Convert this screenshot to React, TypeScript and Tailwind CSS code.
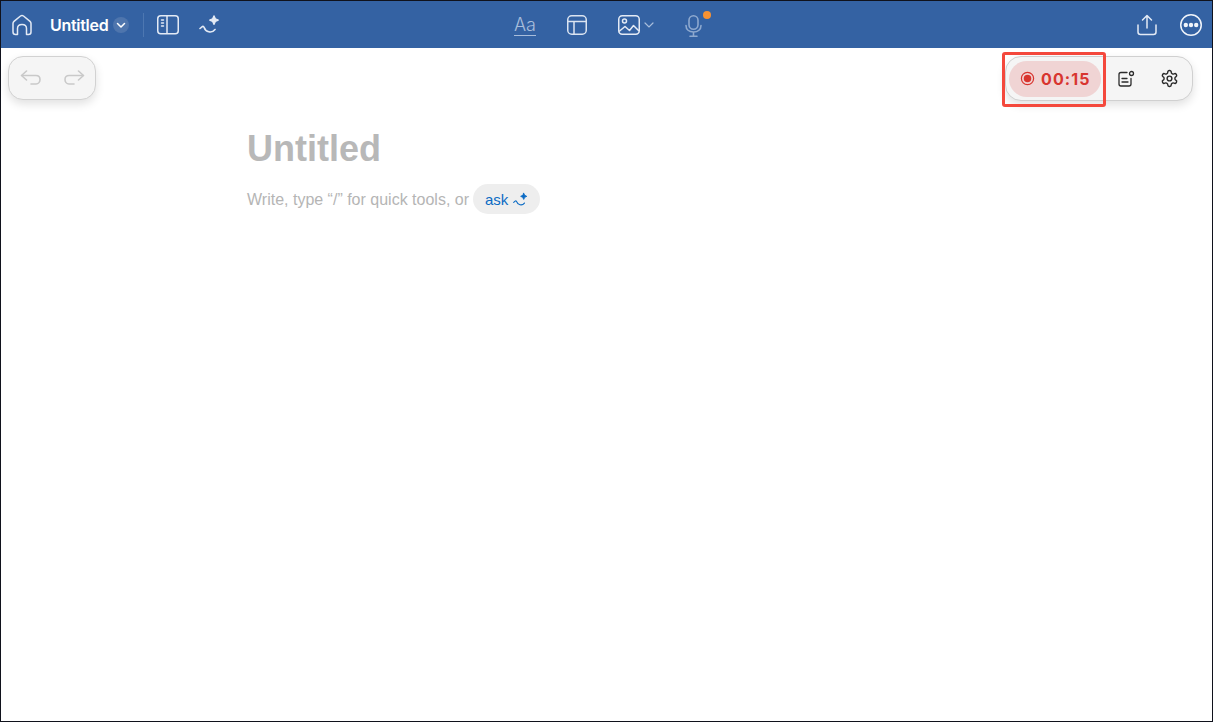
import React from "react";

const Sparkle = ({ className = "" }: { className?: string }) => (
  <svg viewBox="0 0 21 21" className={className} fill="none" stroke="currentColor" strokeWidth="1.600" strokeLinecap="round" strokeLinejoin="round">
    <path d="M1 14.500 L3 12.800 C4 12 4.800 12.500 5.300 13.800 C6.500 17.800 12.500 20 16 15.500" />
    <path d="M15 1.800 L16.400 4.700 L19.300 6.100 L16.400 7.500 L15 10.400 L13.600 7.500 L10.700 6.100 L13.600 4.700 Z" fill="currentColor" strokeWidth="1.200" />
  </svg>
);

export default function App() {
  return (
    <div className="relative flex h-[722px] w-[1213px] flex-col overflow-hidden border border-[#10121c] bg-white font-['Inter',sans-serif]">
      <header className="flex h-[47px] shrink-0 items-center justify-between bg-[#3462a3] text-white">
        <div className="flex items-center">
          <svg viewBox="0 0 22 22" className="ml-[10px] h-[22px] w-[22px]" fill="none" stroke="#e3eaf5" strokeWidth="1.500" strokeLinejoin="round" strokeLinecap="round">
            <path d="M6.500 20.500H4.500C2.800 20.500 2 19.600 2 18V9.500C2 8.600 2.300 8 3 7.400L9.500 2C10.400 1.300 11.600 1.300 12.500 2L19 7.400C19.700 8 20 8.600 20 9.500V18C20 19.600 19.200 20.500 17.500 20.500H15.500V14.500C15.500 12 13.500 10.500 11 10.500C8.500 10.500 6.500 12 6.500 14.500Z" />
          </svg>
          <span className="ml-[17px] text-[16px] font-semibold leading-none tracking-[-0.3px]">Untitled</span>
          <span className="ml-[5px] flex h-4 w-4 items-center justify-center rounded-full bg-[#4e75ad]">
            <svg viewBox="0 0 12 12" className="h-3 w-3" fill="none" stroke="white" strokeWidth="1.500" strokeLinecap="round" strokeLinejoin="round"><path d="M2.500 4.500 6 8l3.500-3.500" /></svg>
          </span>
          <span className="ml-[14px] h-6 w-px bg-[#4d77b1]" />
          <svg viewBox="0 0 22 20" className="ml-[13px] h-5 w-[22px]" fill="none" stroke="#e3eaf5" strokeWidth="1.500">
            <rect x="0.750" y="0.750" width="20.500" height="18" rx="3" />
            <path d="M10 1v18" />
            <path d="M4.500 5h2M4.500 8h2M4.500 11h2" strokeLinecap="round" />
          </svg>
          <Sparkle className="ml-[20px] h-[21px] w-[21px] text-[#e3eaf5]" />
        </div>

        <div className="absolute left-[513px] top-[12px] flex items-center">
          <div className="flex h-[21px] w-[22px] flex-col items-center border-b-[1.500px] border-[#a8bddb] text-[18px] font-light leading-[20px] text-[#a8bddb]">Aa</div>
          <svg viewBox="0 0 20 20" className="ml-[31px] h-5 w-5" fill="none" stroke="#dbe4f1" strokeWidth="1.500">
            <rect x="0.750" y="0.750" width="18.500" height="18.500" rx="4" />
            <path d="M1 6.500h18M7 6.500V19" />
          </svg>
          <svg viewBox="0 0 22 20" className="ml-[31px] h-5 w-[22px]" fill="none" stroke="#e3eaf5" strokeWidth="1.500" strokeLinejoin="round">
            <rect x="0.750" y="0.750" width="20.500" height="18.500" rx="3.500" />
            <circle cx="6.500" cy="6" r="2" />
            <path d="M1 16.500 7 11.500 11.500 15.500 15.500 10.500 21 16" />
          </svg>
          <svg viewBox="0 0 10 8" className="ml-[4px] h-2 w-[10px]" fill="none" stroke="#a8bddb" strokeWidth="1.200" strokeLinecap="round"><path d="M1 2l4 4 4-4" /></svg>
          <span className="relative ml-[31px] mt-[2px] block h-[22px] w-[17px]">
            <svg viewBox="0 0 17 22" className="h-[22px] w-[17px]" fill="none" stroke="#8ea9cf" strokeWidth="1.600" strokeLinecap="round">
              <rect x="4" y="0.800" width="9" height="13.500" rx="4.500" />
              <path d="M1 10.500c0 4 3 6.500 7.500 6.500s7.500-2.500 7.500-6.500M8.500 17v4M5 21.200h7" />
            </svg>
            <span className="absolute left-[18px] top-[-4px] h-2 w-2 rounded-full bg-[#f79233]" />
          </span>
        </div>

        <div className="flex items-center">
          <svg viewBox="0 0 20 22" className="mr-[23px] h-[22px] w-5" fill="none" stroke="#e3eaf5" strokeWidth="1.500" strokeLinecap="round" strokeLinejoin="round">
            <path d="M10 14V2M5.500 6 10 1.500 14.500 6" />
            <path d="M1 11v7c0 1.700.8 2.500 2.500 2.500h13c1.700 0 2.500-.8 2.500-2.500v-7" />
          </svg>
          <svg viewBox="0 0 22 22" className="mr-[10px] h-[22px] w-[22px]" fill="none">
            <circle cx="11" cy="11" r="10.250" stroke="#f0f4fa" strokeWidth="1.500" />
            <circle cx="5.800" cy="11" r="2.200" fill="#f0f4fa" />
            <circle cx="11" cy="11" r="2.200" fill="#f0f4fa" />
            <circle cx="16.200" cy="11" r="2.200" fill="#f0f4fa" />
          </svg>
        </div>
      </header>

      <main className="w-[640px] pl-[246px] pt-[79px]">
        <h1 className="text-[36px] font-bold leading-[44px] text-[#b8b8b8] font-['Liberation_Sans',sans-serif]">Untitled</h1>
        <div className="mt-[13px] flex items-center font-['Liberation_Sans',sans-serif] text-[16px] leading-[28px] text-[#b5b5b5]">
          <span className="pt-[2px]">Write, type “/” for quick tools, or</span>
          <span className="ml-[4px] flex h-[30px] w-[67px] items-center gap-[5px] rounded-full bg-[#eeeeee] pl-[12px] pt-[1px] text-[15px] text-[#0b6bc4]">
            ask
            <Sparkle className="h-[15px] w-[15px]" />
          </span>
        </div>
      </main>

      <div className="absolute left-[7px] top-[55px] flex h-[44px] w-[88px] items-center justify-center gap-[21px] rounded-[15px] border border-[#d2d2d2] bg-[#f5f5f5] shadow-[0_4px_10px_rgba(0,0,0,0.12)]">
        <svg viewBox="0 0 22 16" className="h-4 w-[22px]" fill="none" stroke="#c9c9c9" strokeWidth="1.600" strokeLinecap="round" strokeLinejoin="round">
          <path d="M6.500 1 1.500 5.500 6.500 10" />
          <path d="M2 5.500h14c2.500 0 4 1.800 4 4s-1.500 4.500-4 4.500h-5" />
        </svg>
        <svg viewBox="0 0 22 16" className="h-4 w-[22px]" fill="none" stroke="#c9c9c9" strokeWidth="1.600" strokeLinecap="round" strokeLinejoin="round">
          <path d="M15.500 1 20.500 5.500 15.500 10" />
          <path d="M20 5.500H6c-2.500 0-4 1.800-4 4s1.500 4.500 4 4.500h5" />
        </svg>
      </div>

      <div className="absolute left-[1004px] top-[55px] flex h-[45px] w-[188px] items-center rounded-[16px] border border-[#d0d0d0] bg-[#f5f5f5] pl-[3px] shadow-[0_4px_10px_rgba(0,0,0,0.12)]">
        <div className="flex h-[36px] w-[92px] items-center rounded-full bg-[#f0d4d4] pl-[11px] text-[#d8352f]">
          <svg viewBox="0 0 16 16" className="h-[15px] w-[15px]" fill="none">
            <circle cx="8" cy="8" r="6.500" stroke="#d8352f" strokeWidth="1.300" />
            <circle cx="8" cy="8" r="4" fill="#d8352f" />
          </svg>
          <span className="ml-[6px] text-[16px] font-bold leading-none tracking-[1.1px]">00:15</span>
        </div>
        <svg viewBox="0 0 18 18" className="ml-[16px] h-[18px] w-[18px]" fill="none" stroke="#2b2b2b" strokeWidth="1.300" strokeLinecap="round" strokeLinejoin="round">
          <path d="M10 2.500H4C2.800 2.500 2 3.300 2 4.500v9.500c0 1.200.8 2 2 2h8c1.200 0 2-.8 2-2V8.500" />
          <circle cx="14.500" cy="3.500" r="2" />
          <path d="M5 8.500h5M5 12h6" />
        </svg>
        <svg viewBox="0 0 24 24" className="ml-[25px] h-[19px] w-[19px]" fill="none" stroke="#2b2b2b" strokeWidth="1.800" strokeLinecap="round" strokeLinejoin="round">
          <path d="M12.220 2h-.44a2 2 0 0 0-2 2v.18a2 2 0 0 1-1 1.730l-.43.250a2 2 0 0 1-2 0l-.15-.08a2 2 0 0 0-2.730.73l-.22.380a2 2 0 0 0 .73 2.730l.15.100a2 2 0 0 1 1 1.720v.510a2 2 0 0 1-1 1.740l-.15.090a2 2 0 0 0-.73 2.730l.22.380a2 2 0 0 0 2.730.73l.15-.08a2 2 0 0 1 2 0l.43.250a2 2 0 0 1 1 1.730V20a2 2 0 0 0 2 2h.44a2 2 0 0 0 2-2v-.18a2 2 0 0 1 1-1.730l.43-.250a2 2 0 0 1 2 0l.15.080a2 2 0 0 0 2.730-.73l.22-.390a2 2 0 0 0-.73-2.730l-.15-.080a2 2 0 0 1-1-1.740v-.500a2 2 0 0 1 1-1.740l.15-.090a2 2 0 0 0 .73-2.730l-.22-.380a2 2 0 0 0-2.730-.73l-.15.080a2 2 0 0 1-2 0l-.43-.250a2 2 0 0 1-1-1.730V4a2 2 0 0 0-2-2z" />
          <circle cx="12" cy="12" r="3" />
        </svg>
      </div>

      <div className="absolute left-[1001px] top-[51px] h-[55px] w-[104px] rounded-[3px] border-[3px] border-[#f4483c]" />
    </div>
  );
}
